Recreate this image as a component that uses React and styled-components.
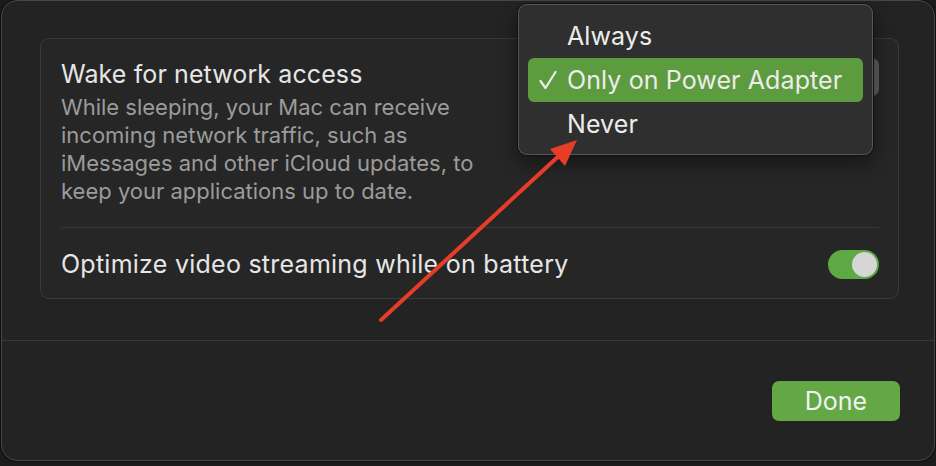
import styled, { createGlobalStyle } from "styled-components";

const GlobalStyle = createGlobalStyle`
  html, body {
    margin: 0;
    padding: 0;
    background: #1b1b1b;
    font-family: Inter, "Noto Sans", sans-serif;
    -webkit-font-smoothing: antialiased;
  }
`;

const Page = styled.div`
  position: relative;
  width: 936px;
  height: 466px;
  overflow: hidden;
`;

// SHEET WINDOW
const Sheet = styled.div`
  box-sizing: border-box;
  width: 934px;
  height: 461px;
  margin-left: 1px;
  background: #232323;
  border: 1px solid #474747;
  border-radius: 16px;
  box-shadow: 0 0 0 1px #0e0e0e;
  display: flex;
  flex-direction: column;
`;

const Content = styled.div`
  padding: 37px 35px 41px 38px;
  border-bottom: 1px solid #383838;
`;

const Group = styled.div`
  background: #262626;
  border: 1px solid #3a3a3a;
  border-radius: 9px;
`;

const Row = styled.div`
  display: flex;
  justify-content: space-between;
  align-items: ${(props) => (props.top ? "flex-start" : "center")};
  padding: ${(props) => (props.top ? "19px 19px 22px 20px" : "20px 19px 17px 20px")};
`;

const TextBlock = styled.div`
  display: flex;
  flex-direction: column;
`;

const Title = styled.div`
  font-size: 25px;
  line-height: 33px;
  letter-spacing: ${(props) => (props.wide ? "0.25px" : "0.1px")};
  color: #e6e6e6;
`;

const Description = styled.div`
  width: 425px;
  margin-top: 2px;
  font-size: 22px;
  line-height: 28px;
  color: #9b9b9b;
`;

const Divider = styled.div`
  height: 1px;
  margin: 0 19px 0 20px;
  background: #383838;
`;

const PopupButton = styled.div`
  width: 300px;
  height: 38px;
  border-radius: 7px;
  background: #5b5b5b;
`;

// TOGGLE SWITCH
const Toggle = styled.div`
  width: 51px;
  height: 29px;
  box-sizing: border-box;
  padding: 2px;
  border-radius: 15px;
  background: #5ea944;
  display: flex;
  justify-content: ${(props) => (props.on ? "flex-end" : "flex-start")};
`;

const Knob = styled.div`
  width: 25px;
  height: 25px;
  border-radius: 50%;
  background: #d6d6d6;
`;

const Footer = styled.div`
  display: flex;
  justify-content: flex-end;
  padding: 40px 34px 0 0;
`;

const DoneButton = styled.button`
  width: 128px;
  height: 40px;
  border: none;
  border-radius: 7px;
  background: #63a845;
  color: #f2f2f2;
  font-family: Inter, "Noto Sans", sans-serif;
  font-size: 25px;
  padding: 0;
`;

// DROPDOWN MENU (overlay)
const Menu = styled.div`
  position: absolute;
  left: 518px;
  top: 4px;
  width: 355px;
  box-sizing: border-box;
  padding: 10px 10px 9px;
  background: #2f2f2f;
  border-radius: 9px;
  box-shadow: inset 0 0 0 1px #575757, 0 0 0 1px #111, 0 8px 20px rgba(0, 0, 0, 0.45);
`;

const MenuItem = styled.div`
  display: flex;
  align-items: center;
  height: 44px;
  border-radius: 6px;
  background: ${(props) => (props.selected ? "#5c9c3e" : "transparent")};
  color: #ececec;
  font-size: 25px;
  letter-spacing: 0.1px;
`;

const CheckSlot = styled.span`
  width: 39px;
  display: flex;
  justify-content: center;
`;

const Arrow = styled.svg`
  position: absolute;
  left: 0;
  top: 0;
  pointer-events: none;
`;

const CheckMark = () => (
  <svg width="18" height="20" viewBox="0 0 18 20">
    <polyline
      points="1.5,11 6.5,18 16.5,2"
      fill="none"
      stroke="#ececec"
      strokeWidth="2.2"
      strokeLinecap="round"
      strokeLinejoin="round"
    />
  </svg>
);

const App = () => {
  const options = ["Always", "Only on Power Adapter", "Never"];
  const selected = "Only on Power Adapter";

  return (
    <Page>
      <GlobalStyle />
      <Sheet>
        <Content>
          <Group>
            {/* WAKE FOR NETWORK ACCESS */}
            <Row top>
              <TextBlock>
                <Title>Wake for network access</Title>
                <Description>
                  While sleeping, your Mac can receive incoming network traffic,
                  such as iMessages and other iCloud updates, to keep your
                  applications up to date.
                </Description>
              </TextBlock>
              <PopupButton />
            </Row>
            <Divider />
            {/* VIDEO STREAMING */}
            <Row>
              <Title wide>Optimize video streaming while on battery</Title>
              <Toggle on>
                <Knob />
              </Toggle>
            </Row>
          </Group>
        </Content>
        <Footer>
          <DoneButton>Done</DoneButton>
        </Footer>
      </Sheet>

      <Menu>
        {options.map((opt) => (
          <MenuItem key={opt} selected={opt === selected}>
            <CheckSlot>{opt === selected && <CheckMark />}</CheckSlot>
            {opt}
          </MenuItem>
        ))}
      </Menu>

      <Arrow width="936" height="466" viewBox="0 0 936 466">
        <line x1="381" y1="320" x2="562" y2="153" stroke="#e63c28" strokeWidth="4" strokeLinecap="round" />
        <polygon points="577,140 565,166 550,149" fill="#e63c28" />
      </Arrow>
    </Page>
  );
};

export default App;
